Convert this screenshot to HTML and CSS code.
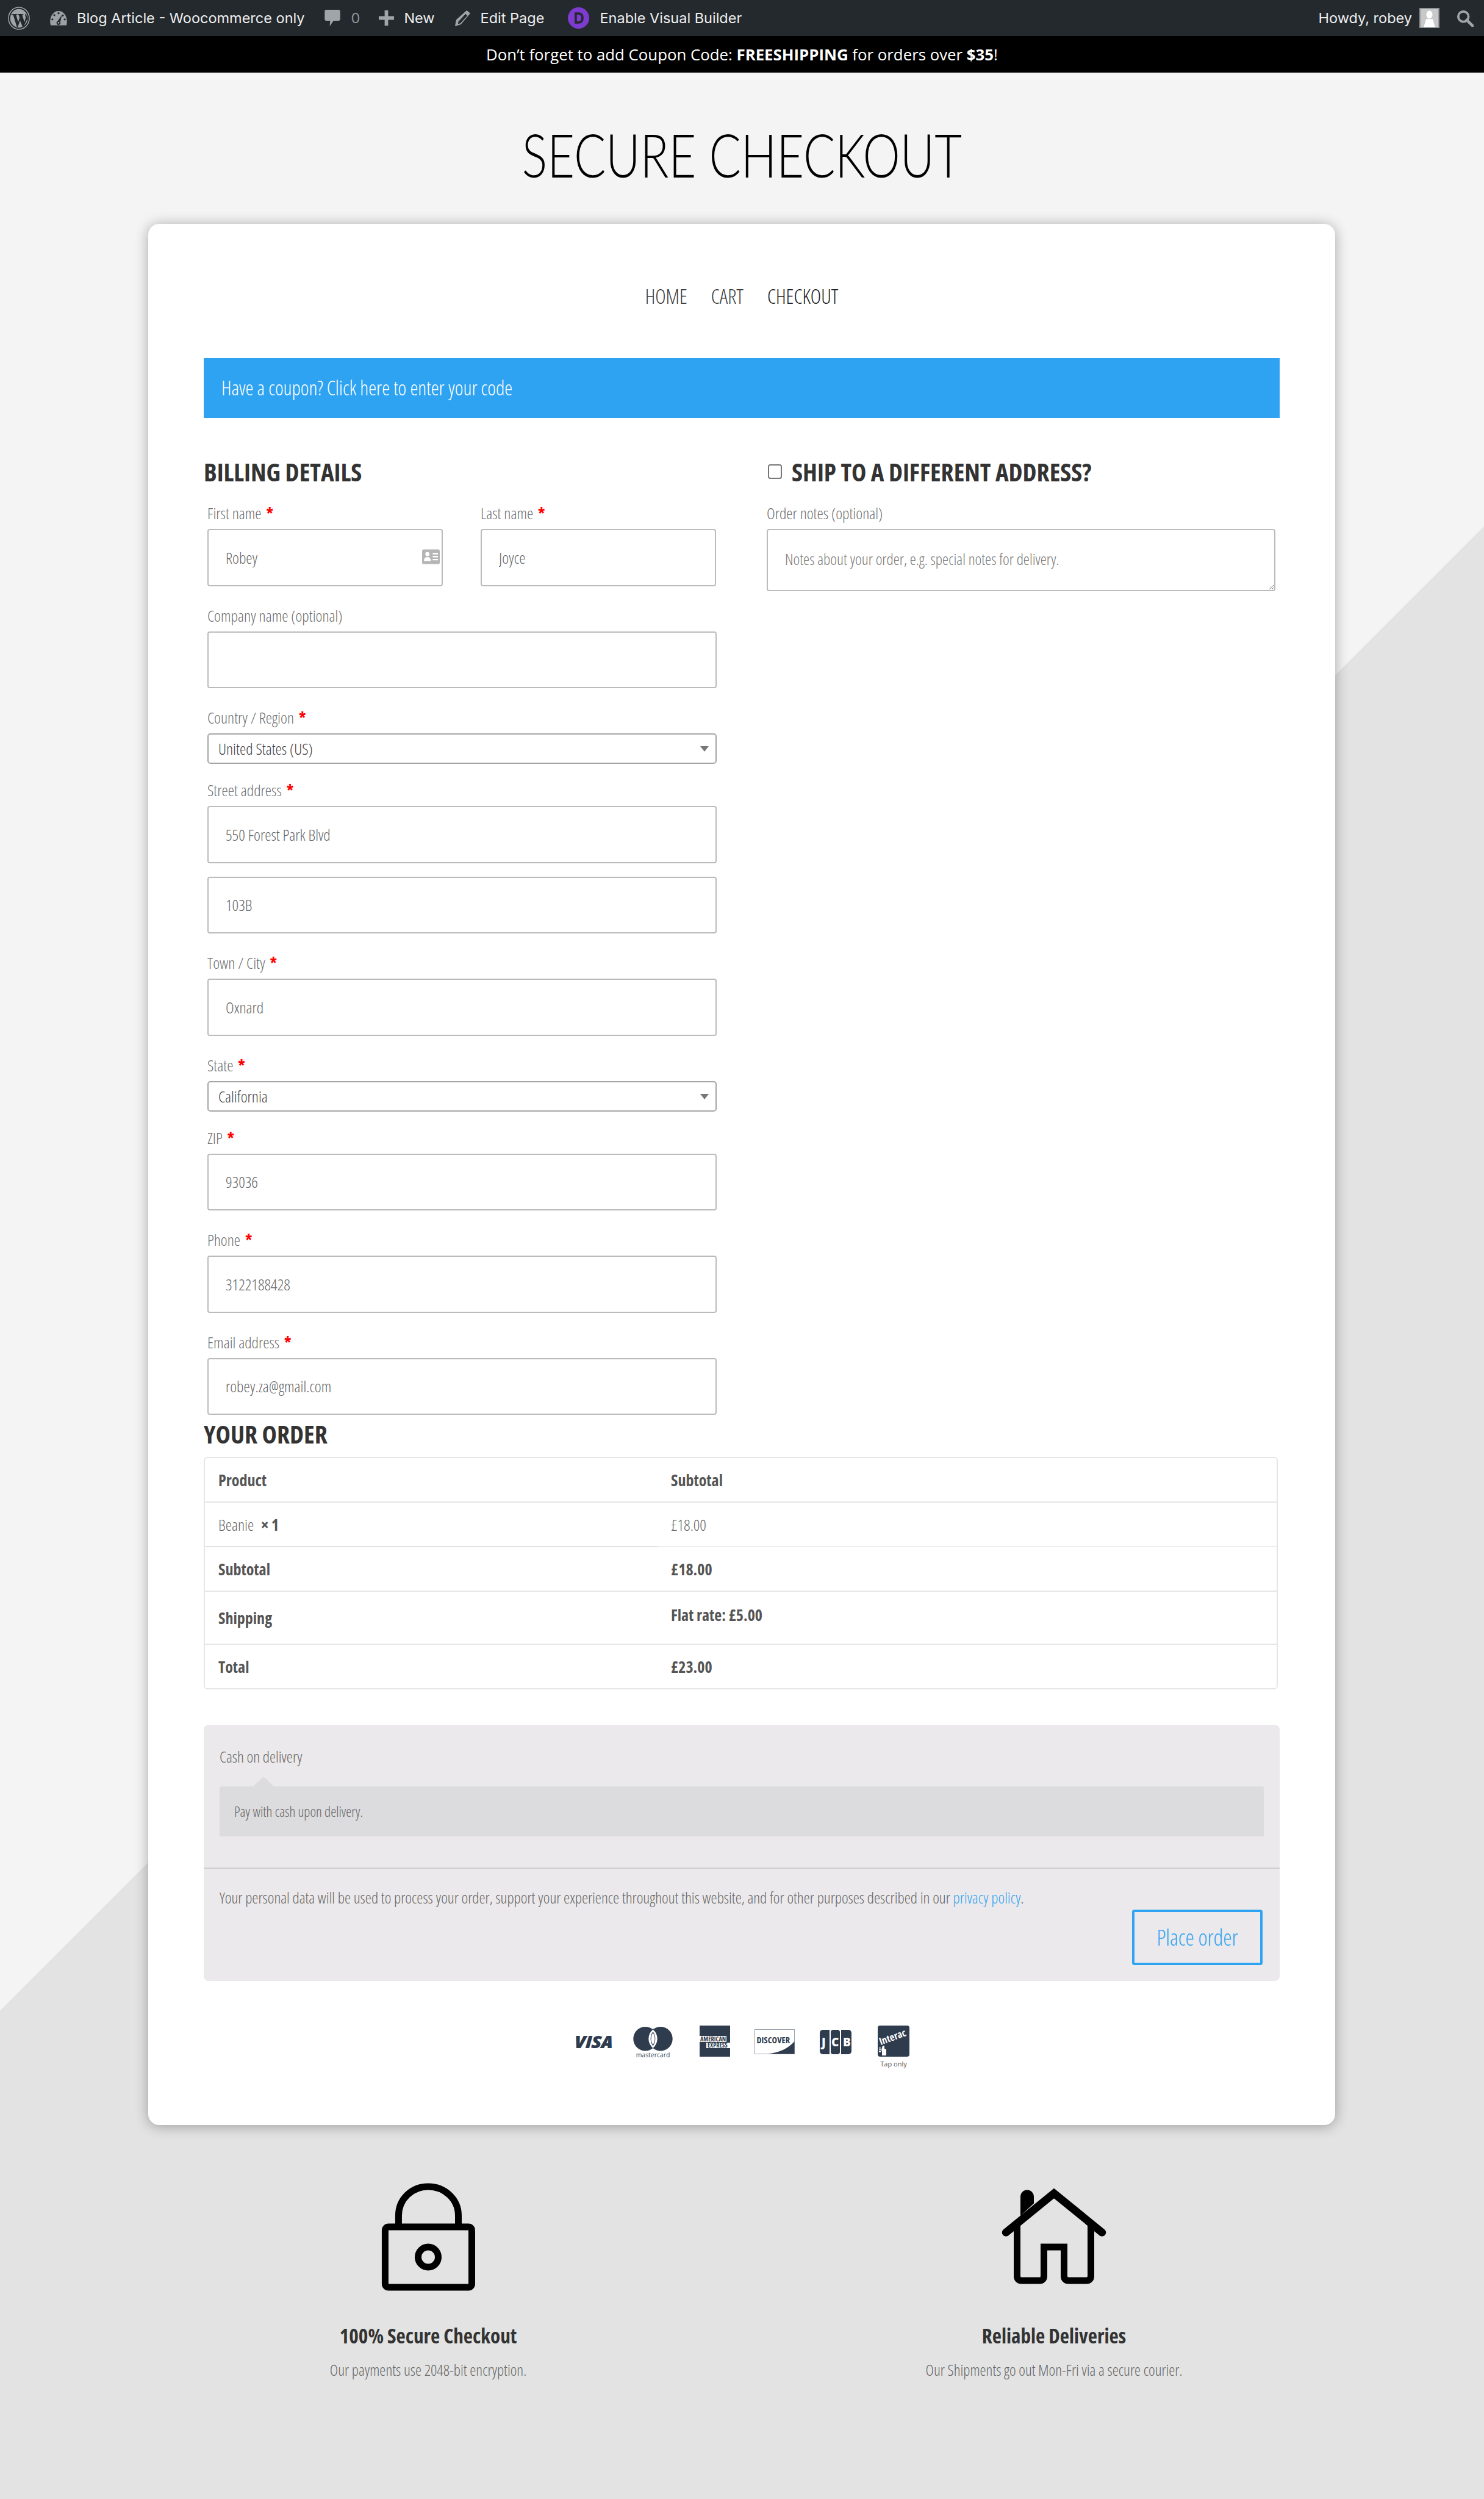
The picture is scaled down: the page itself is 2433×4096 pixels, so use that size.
FILE: index.html
```html
<!DOCTYPE html>
<html lang="en">
<head>
<meta charset="utf-8">
<title>Secure Checkout</title>
<link rel="stylesheet" href="styles.css">
</head>
<body>
<div class="adminbar">
  <svg class="ab-wp" viewBox="0 0 38 40"><ellipse cx="19" cy="20" rx="18" ry="19" fill="none" stroke="#a0a5aa" stroke-width="1.600"/><ellipse cx="19" cy="20" rx="15" ry="16" fill="#a0a5aa"/><path d="M6 12.500h10v1.500h-2l3.800 12.500 2.500-7.500-1.800-5h-1.800v-1.500h10v1.500h-2l3.800 12.500 2-6.500c.8-3-.8-4-.8-5.800 0-1 .6-1.700 1.500-2.200L34 20l-7 15h-1.500l-4.500-11-4 11h-1.500L9 14H6z" fill="#24292d"/></svg>
  <svg class="ab-dash" viewBox="0 0 32 27"><path d="M2 26.500C-1.500 13 6 1 16 1s17.500 12 14 25.500z" fill="#9ca1a6"/><circle cx="16" cy="5" r="1.800" fill="#24292d"/><circle cx="8.500" cy="8.500" r="1.800" fill="#24292d"/><circle cx="23.500" cy="9" r="1.800" fill="#24292d"/><circle cx="5" cy="16" r="1.800" fill="#24292d"/><circle cx="27" cy="16" r="1.800" fill="#24292d"/><path d="M22 8l-3 12.500a3.500 3.500 0 1 1-4.500-1.500z" fill="#24292d"/><circle cx="16" cy="22" r="1.500" fill="#9ca1a6"/></svg>
  <span class="ab-text ab-site">Blog Article - Woocommerce only</span>
  <svg class="ab-comment" viewBox="0 0 28 32"><path d="M3 1h22a3 3 0 0 1 3 3v14a3 3 0 0 1-3 3h-9l-7 10 1-10H3a3 3 0 0 1-3-3V4a3 3 0 0 1 3-3z" fill="#a0a5aa"/></svg>
  <span class="ab-text ab-count">0</span>
  <svg class="ab-plus" viewBox="0 0 26 26"><path d="M10 0h6v10h10v6H16v10h-6V16H0v-6h10z" fill="#a0a5aa"/></svg>
  <span class="ab-text ab-new">New</span>
  <svg class="ab-pencil" viewBox="0 0 28 28"><path d="M21 1l6 5-16 19-10 3 2-11z" fill="#a0a5aa"/><path d="M19 7l3 3-12 13-4 1 1-4z" fill="#24292d"/></svg>
  <span class="ab-text ab-edit">Edit Page</span>
  <svg class="ab-divi" viewBox="0 0 38 38"><circle cx="19" cy="19" r="19" fill="#7e3bd0"/><path d="M12 9h7c6 0 9 4 9 10s-3 10-9 10h-7zM16 13v12h3c3 0 5-2 5-6s-2-6-5-6z" fill="#24292d"/></svg>
  <span class="ab-text ab-vb">Enable Visual Builder</span>
  <span class="ab-text ab-howdy">Howdy, robey</span>
  <svg class="ab-avatar" viewBox="0 0 36 36"><rect x="1" y="1" width="34" height="34" fill="#c8c8c8" stroke="#8c9196" stroke-width="2"/><ellipse cx="18" cy="12" rx="5.500" ry="7" fill="#fff"/><path d="M12 20h12l4 14H8z" fill="#fff"/></svg>
  <svg class="ab-search" viewBox="0 0 30 30"><circle cx="12" cy="12" r="9" fill="none" stroke="#a0a5aa" stroke-width="4"/><path d="M18 18l10 10" stroke="#a0a5aa" stroke-width="5" stroke-linecap="round"/></svg>
</div>
<div class="promo">Don’t forget to add Coupon Code: <b>FREESHIPPING</b> for orders over <b>$35</b>!</div>
<h1 class="title"><span>SECURE CHECKOUT</span></h1>
<main class="card">
  <nav class="nav"><a>HOME</a><a>CART</a><a class="current">CHECKOUT</a></nav>
  <div class="coupon">Have a coupon? Click here to enter your code</div>
  <div class="cols">
    <section class="billing">
      <h3 class="heading flush">BILLING DETAILS</h3>
      <div class="name-row">
        <div class="field has-icon">
          <label>First name <i>*</i></label>
          <input class="inp" value="Robey">
          <svg class="card-icon" viewBox="0 0 30 25"><rect width="30" height="25" rx="3" fill="#b5b5b5"/><circle cx="9" cy="8" r="3.500" fill="#fff"/><path d="M3 20c0-5 3-7 6-7s6 2 6 7z" fill="#fff"/><path d="M18 6h9v2.500h-9zM18 11h9v2.500h-9zM18 16h9v2.500h-9z" fill="#fff"/></svg>
        </div>
        <div class="field">
          <label>Last name <i>*</i></label>
          <input class="inp" value="Joyce">
        </div>
      </div>
      <div class="field"><label>Company name (optional)</label><input class="inp"></div>
      <div class="field sel"><label>Country / Region <i>*</i></label><div class="select">United States (US)</div></div>
      <div class="field tight"><label>Street address <i>*</i></label><input class="inp" value="550 Forest Park Blvd"></div>
      <div class="field"><input class="inp" value="103B"></div>
      <div class="field"><label>Town / City <i>*</i></label><input class="inp" value="Oxnard"></div>
      <div class="field sel"><label>State <i>*</i></label><div class="select">California</div></div>
      <div class="field"><label>ZIP <i>*</i></label><input class="inp" value="93036"></div>
      <div class="field"><label>Phone <i>*</i></label><input class="inp" value="3122188428"></div>
      <div class="field last"><label>Email address <i>*</i></label><input class="inp" value="robey.za@gmail.com"></div>
    </section>
    <section class="shipping">
      <h3 class="heading ship"><span class="check"></span>SHIP TO A DIFFERENT ADDRESS?</h3>
      <div class="field"><label>Order notes (optional)</label><textarea class="notes" placeholder="Notes about your order, e.g. special notes for delivery."></textarea></div>
    </section>
  </div>
  <h3 class="heading order-h">YOUR ORDER</h3>
  <table class="order">
    <tr><th class="c1">Product</th><th>Subtotal</th></tr>
    <tr><td class="c1">Beanie <b class="qty">× 1</b></td><td>£18.00</td></tr>
    <tr class="dark"><th class="c1">Subtotal</th><th>£18.00</th></tr>
    <tr class="ship-row"><th class="c1">Shipping</th><th class="flat">Flat rate: £5.00</th></tr>
    <tr><th class="c1">Total</th><th>£23.00</th></tr>
  </table>
  <div class="payment">
    <div class="method">Cash on delivery</div>
    <div class="method-box">Pay with cash upon delivery.</div>
    <div class="place">
      <p class="privacy">Your personal data will be used to process your order, support your experience throughout this website, and for other purposes described in our <a>privacy policy</a>.</p>
      <div class="btn-row"><button class="btn">Place order</button></div>
    </div>
  </div>
  <div class="cards">
    <svg class="pay p-visa" viewBox="0 0 64 70"><text x="0" y="37" textLength="64" lengthAdjust="spacingAndGlyphs" class="visa-t">VISA</text></svg>
    <svg class="pay p-mc" viewBox="0 0 65 70"><circle cx="20" cy="21.700" r="19.700" fill="#2f3c4e"/><circle cx="45" cy="21.700" r="19.700" fill="#2f3c4e"/><path d="M32.500 6.500a19.700 19.700 0 0 1 0 30.400a19.700 19.700 0 0 1 0-30.400z" fill="#fff"/><path d="M32.500 10a19.700 19.700 0 0 1 0 23.400a19.700 19.700 0 0 1 0-23.400z" fill="#2f3c4e"/><path d="M32.500 12c-4 6-4 13.400 0 19.400c4-6 4-13.400 0-19.400z" fill="#fff"/><text x="32.500" y="52" text-anchor="middle" class="mc-t">mastercard</text></svg>
    <svg class="pay p-amex" viewBox="0 0 50 70"><rect width="50" height="51" fill="#2f3c4e"/><rect x="0" y="17" width="44" height="10" fill="#fff"/><rect x="11" y="28" width="39" height="9" fill="#fff"/><text x="1" y="26" class="amex-t">AMERICAN</text><text x="13" y="36" class="amex-t">EXPRESS</text></svg>
    <svg class="pay p-disc" viewBox="0 0 66 70"><rect x=".5" y="6.500" width="65" height="40" fill="#fff" stroke="#9aa2ad"/><path d="M65.500 26v20.500H21c20-2 34-9 44.500-20.500z" fill="#2f3c4e"/><text x="3.500" y="29" class="disc-t">DISCOVER</text></svg>
    <svg class="pay p-jcb" viewBox="0 0 53 70"><path d="M6 7h11v40H6a5 5 0 0 1-5-5V12a5 5 0 0 1 5-5z" fill="#2f3c4e"/><rect x="19" y="7" width="15" height="40" rx="4" fill="#2f3c4e"/><path d="M36 7h12a5 5 0 0 1 5 5v30a5 5 0 0 1-5 5H36z" fill="#2f3c4e"/><text x="4" y="34" class="jcb-t">J</text><text x="20" y="34" class="jcb-t">C</text><text x="39" y="34" class="jcb-t">B</text></svg>
    <svg class="pay p-int" viewBox="0 0 52 70"><rect width="52" height="51" rx="4" fill="#2f3c4e"/><text x="5" y="32" transform="rotate(-20 5 32)" class="int-t">Interac</text><path d="M8 33h3v5l3 1v10H7v-6l-1-3z" fill="#fff"/><path d="M2 36h3v1.500H2zM2 39h3v1.500H2zM2 42h3v1.500H2z" fill="#fff"/><text x="26" y="67" text-anchor="middle" class="tap-t">Tap only</text></svg>
  </div>
</main>
<footer class="features">
  <div class="feature">
    <svg class="f-icon" viewBox="665 3890 200 204"><rect x="688" y="3974" width="155" height="108" rx="6" class="ln"/><path d="M712 3974v-20c0-30 24-52 53-52s54 22 54 52v20" class="ln"/><circle cx="765" cy="4028" r="18" class="ln"/></svg>
    <h4>100% Secure Checkout</h4>
    <p>Our payments use 2048-bit encryption.</p>
  </div>
  <div class="feature">
    <svg class="f-icon" viewBox="1783 3890 200 204"><path d="M1817 3970v92c0 5 3 8 8 8h32c5 0 8-3 8-8v-52h36v52c0 5 3 8 8 8h32c5 0 8-3 8-8v-92" class="ln"/><path class="roof" d="M1797 3984L1883 3914L1969 3984"/><path d="M1823 3954v-34a12 12 0 0 1 24 0v12z" fill="#000"/></svg>
    <h4>Reliable Deliveries</h4>
    <p>Our Shipments go out Mon-Fri via a secure courier.</p>
  </div>
</footer>
</body>
</html>
```

FILE: styles.css
```css
* { box-sizing: border-box; }
html, body { margin: 0; padding: 0; }
body {
  min-height: 4096px;
  background: linear-gradient(135deg, #f4f4f4 2330px, #e3e3e3 2330px);
  font-family: "Open Sans", "Liberation Sans", sans-serif;
  font-stretch: 75%;
  font-weight: 300;
  color: #666;
  overflow-x: hidden;
}
.adminbar {
  height: 59px;
  background: #24292d;
  display: flex;
  align-items: center;
  padding: 0 0 0 13px;
  font-stretch: 100%;
}
.ab-text { color: #eee; font-family: "Inter", "Open Sans", sans-serif; font-size: 23.5px; font-weight: 400; font-stretch: 100%; white-space: nowrap; line-height: 59px; }
.ab-wp { width: 36px; height: 38px; }
.ab-dash { width: 30px; height: 25px; margin-left: 32px; }
.ab-site { margin-left: 15px; }
.ab-comment { width: 26px; height: 29px; margin-left: 32px; }
.ab-count { margin-left: 18px; color: #8c9196; }
.ab-plus { width: 25px; height: 25px; margin-left: 31px; }
.ab-new { margin-left: 16px; }
.ab-pencil { width: 27px; height: 27px; margin-left: 32px; }
.ab-edit { margin-left: 16px; }
.ab-divi { width: 35px; height: 35px; margin-left: 39px; }
.ab-vb { margin-left: 17px; }
.ab-howdy { margin-left: auto; }
.ab-avatar { width: 33px; height: 33px; margin-left: 12px; }
.ab-search { width: 28px; height: 28px; margin-left: 28px; margin-right: 17px; }
.promo {
  height: 60px;
  background: #000;
  color: #fff;
  text-align: center;
  line-height: 60px;
  font-size: 25.8px;
  font-weight: 400;
  font-stretch: 100%;
}
.promo b { font-weight: 700; }
.title {
  margin: 74px 0 54px;
  height: 120px;
  text-align: center;
  font-family: "Lato", sans-serif;
  font-weight: 300;
  font-stretch: 100%;
  font-size: 98px;
  line-height: 120px;
  color: #000;
}
.title span { display: inline-block; transform: scaleX(0.79); white-space: nowrap; }
.card {
  width: 1946px;
  margin-left: 243px;
  background: #fff;
  border-radius: 18px;
  box-shadow: 0 2px 22px rgba(0, 0, 0, 0.32);
  padding: 99px 91px 93px 91px;
}
.nav {
  display: flex;
  justify-content: center;
  gap: 39px;
  height: 40px;
  line-height: 40px;
  font-size: 33px;
  color: #3c3c3c;
  margin-bottom: 81px;
}
.nav .current { color: #222; }
.coupon {
  height: 98px;
  background: #2ea3f2;
  color: #fff;
  font-size: 32.7px;
  line-height: 98px;
  padding-left: 29px;
  margin-bottom: 68px;
}
.cols { display: grid; grid-template-columns: 841px 841px; column-gap: 82px; }
.heading {
  margin: 0;
  height: 40px;
  line-height: 40px;
  font-size: 41.2px;
  font-weight: 700;
  color: #333;
}
.flush { margin-bottom: 28px; }
.ship { display: flex; align-items: center; margin-bottom: 28px; }
.check {
  width: 23px; height: 24px;
  border: 2px solid #767676;
  border-radius: 4px;
  background: #fff;
  margin-right: 16px;
  margin-left: 2px;
  flex: none;
}
.billing .field, .billing .name-row { margin-left: 6px; }
.billing .name-row .field { margin-left: 0; }
.name-row { display: grid; grid-template-columns: 386px 386px; column-gap: 62px; }
.field { position: relative; margin-bottom: 28px; }
.field.tight { margin-bottom: 22px; }
.field.sel { margin-bottom: 23px; }
.field.last { margin-bottom: 0; }
.shipping .field { margin-right: 7px; }
label {
  display: block;
  height: 40px;
  line-height: 40px;
  font-size: 26px;
  color: #6e6e6e;
  margin-bottom: 6px;
}
label i { color: #f00; font-style: normal; font-weight: 700; margin-left: 3px; }
.inp {
  display: block;
  width: 100%;
  height: 93.5px;
  border: 2px solid #bbb;
  border-radius: 4px;
  background: #fff;
  padding: 0 28px;
  font: inherit;
  font-stretch: 75%;
  font-size: 26px;
  color: #666;
}
.card-icon { position: absolute; top: 79px; right: 5px; width: 29px; height: 25px; }
.select {
  position: relative;
  height: 50px;
  margin-top: 2px;
  border: 2px solid #a5a5a5;
  border-radius: 5px;
  line-height: 46px;
  padding-left: 16px;
  font-size: 26px;
  color: #444;
  background: #fff;
}
.select::after {
  content: "";
  position: absolute;
  right: 11px; top: 19px;
  border: 7px solid transparent;
  border-top: 9px solid #777;
  border-bottom: 0;
}
.notes {
  display: block;
  width: 100%;
  height: 102px;
  margin-top: 3px;
  border: 2px solid #bbb;
  border-radius: 4px;
  padding: 30px 28px 0;
  font: inherit;
  font-stretch: 75%;
  font-size: 25.6px;
  color: #666;
}
.notes::placeholder { color: #777; opacity: 1; }
.order-h { margin: 11px 0 18px; }
.order {
  width: 1761px;
  border-collapse: separate;
  border-spacing: 0;
  border: 2px solid #e6e6e6;
  border-radius: 6px;
  font-size: 26px;
  color: #666;
  table-layout: fixed;
}
.order th, .order td {
  height: 73px;
  padding: 0 0 0 22px;
  text-align: left;
  border-top: 2px solid #e6e6e6;
  font-weight: 300;
}
.order th { font-weight: 700; color: #555; }
.order tr:first-child th { border-top: 0; height: 71px; }
.order .c1 { width: 742px; }
.order .qty { font-weight: 700; color: #555; margin-left: 7px; }
.order .ship-row th { height: 87px; }
.order .flat { vertical-align: top; padding-top: 20px; }
.order .dark th { border-top-color: #ededed; }
.order .dark th.c1 { border-top-color: #e2e2e2; }
.payment {
  margin-top: 58px;
  background: #ebe9eb;
  border-radius: 8px;
  padding-top: 34px;
  font-size: 25.5px;
  color: #666;
}
.method { height: 36px; line-height: 36px; margin: 0 26px 31px; }
.method-box {
  position: relative;
  height: 82px;
  margin: 0 26px;
  background: #dcdbde;
  border-radius: 3px;
  line-height: 82px;
  padding-left: 24px;
  font-size: 23px;
}
.method-box::before {
  content: "";
  position: absolute;
  left: 55px; top: -16px;
  border: 17px solid transparent;
  border-top: 0;
  border-bottom: 16px solid #dcdbde;
}
.place { margin-top: 51px; border-top: 2px solid #cfcdd0; padding: 29px 28px 26px 26px; }
.privacy { margin: 0; height: 36px; line-height: 36px; }
.privacy a { color: #2ea3f2; }
.btn-row { display: flex; justify-content: flex-end; margin-top: 2px; }
.btn {
  width: 214px;
  height: 91px;
  border: 4px solid #2ea3f2;
  border-radius: 4px;
  background: transparent;
  color: #2ea3f2;
  font: inherit;
  font-stretch: 75%;
  font-size: 36px;
}
.cards { display: flex; justify-content: center; margin-top: 73px; height: 70px; }
.pay { height: 70px; flex: none; }
.p-visa { width: 64px; }
.p-mc { width: 65px; margin-left: 33px; }
.p-amex { width: 50px; margin-left: 44px; }
.p-disc { width: 66px; margin-left: 40px; }
.p-jcb { width: 53px; margin-left: 40px; }
.p-int { width: 52px; margin-left: 43px; }
.visa-t { font: italic 800 29px "Open Sans", sans-serif; font-stretch: 87%; fill: #2f3c4e; }
.mc-t { font: 400 10.4px "Open Sans", sans-serif; fill: #2f3c4e; }
.amex-t { font: 700 10.2px "Open Sans", sans-serif; font-stretch: 75%; fill: #2f3c4e; }
.disc-t { font: 700 14.4px "Open Sans", sans-serif; font-stretch: 75%; fill: #2f3c4e; }
.jcb-t { font: 800 19px "Open Sans", sans-serif; fill: #fff; }
.int-t { font: 700 16.5px "Open Sans", sans-serif; font-stretch: 75%; fill: #fff; }
.tap-t { font: 400 11px "Open Sans", sans-serif; fill: #555; }
.features {
  display: grid;
  grid-template-columns: 920px 920px;
  column-gap: 106px;
  margin-left: 242px;
  padding-top: 90px;
}
.feature { display: flex; flex-direction: column; align-items: center; }
.f-icon { width: 184px; height: 187px; }
.ln { fill: none; stroke: #000; stroke-width: 12; }
.roof { fill: none; stroke: #000; stroke-width: 14; stroke-linecap: round; stroke-linejoin: miter; }
.feature h4 { margin: 47px 0 15px; height: 44px; line-height: 44px; font-size: 33.2px; font-weight: 700; color: #333; }
.feature p { margin: 0; height: 36px; line-height: 36px; font-size: 25.4px; color: #666; }
```
